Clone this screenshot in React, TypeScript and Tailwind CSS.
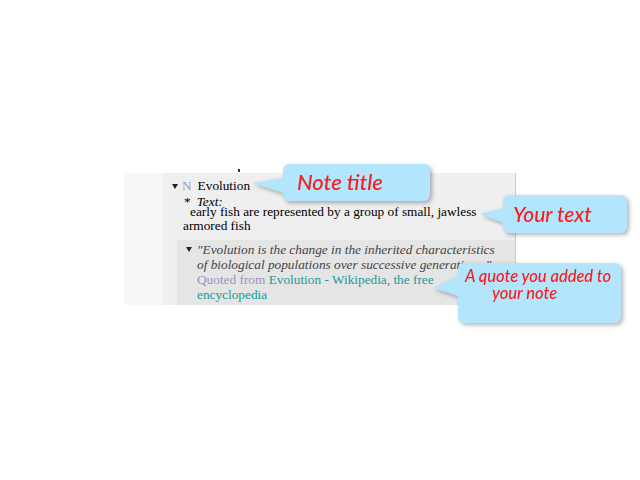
import React from 'react';

const Tri = ({ className }: { className: string }) => (
  <svg viewBox="0 0 6 5" className={className}>
    <polygon points="0,0 6,0 3,5" fill="currentColor" />
  </svg>
);

export default function App() {
  return (
    <div className="relative w-[640px] h-[480px] overflow-hidden bg-white pt-[173px] font-['Liberation_Serif',serif] text-[13.3px] text-black">
      {/* Outline panel */}
      <div className="ml-[124px] flex w-[392px] h-[132px]">
        <div className="w-[39px] bg-[#f7f7f7]" />
        <div className="flex-1 bg-[#efefef] border-r border-[#c8c8c8] pt-[5px]">
          {/* Note title row */}
          <div className="flex items-center h-[16px] leading-[16px] pl-[9px]">
            <Tri className="w-[6px] h-[5px] mr-[4px] text-[#222]" />
            <span className="text-[#9a9ac0]">N</span>
            <span className="ml-[6px]">Evolution</span>
          </div>

          {/* Text label */}
          <div className="flex h-[11px] leading-[16px] pl-[21px]">
            <span>*</span>
            <span className="ml-[6px] italic">Text:</span>
          </div>

          {/* Note text */}
          <div className="pl-[20px] leading-[14px]">
            <div className="pl-[7px]">early fish are represented by a group of small, jawless</div>
            <div>armored fish</div>
          </div>

          {/* Quote */}
          <div className="mt-[7px] ml-[14px] flex bg-[#e5e5e5] pt-[2px] pb-[3px] pl-[9px] leading-[15px]">
            <Tri className="mt-[5px] w-[6px] h-[5px] mr-[5px] shrink-0 text-[#222]" />
            <div>
              <div className="italic text-[#444]">"Evolution is the change in the inherited characteristics</div>
              <div className="italic text-[#444]">of biological populations over successive generations."</div>
              <div>
                <span className="text-[#9a92c4]">Quoted from </span>
                <span className="text-[#1a9a98]">Evolution - Wikipedia, the free</span>
              </div>
              <div className="text-[#1a9a98]">encyclopedia</div>
            </div>
          </div>
        </div>
      </div>

      {/* clipped descender from the row above */}
      <div className="absolute left-[238px] top-[169px] w-[2px] h-[3px] bg-[#333]" />

      {/* Callout: Note title */}
      <div className="absolute left-[250px] top-[164px] flex drop-shadow-[2px_2px_2px_rgba(0,0,0,0.3)]">
        <svg width="33" height="37" className="block shrink-0">
          <polygon points="2,19 33,14 33,29" fill="#b3e5fc" />
        </svg>
        <div className="w-[147px] h-[37px] rounded-[6px] bg-[#b3e5fc] pl-[14px] pt-[4px] font-['Lato',sans-serif] italic font-medium text-[22px] leading-[28px] text-[#ff1a1a]">
          Note title
        </div>
      </div>

      {/* Callout: Your text */}
      <div className="absolute left-[478px] top-[195px] flex drop-shadow-[2px_2px_2px_rgba(0,0,0,0.3)]">
        <svg width="25" height="38" className="block shrink-0">
          <polygon points="2,19 25,13 25,28" fill="#b3e5fc" />
        </svg>
        <div className="w-[124px] h-[38px] rounded-[6px] bg-[#b3e5fc] pl-[10px] pt-[5px] font-['Lato',sans-serif] italic font-medium text-[21px] leading-[28px] text-[#ff1a1a]">
          Your text
        </div>
      </div>

      {/* Callout: quote */}
      <div className="absolute left-[431px] top-[263px] flex drop-shadow-[2px_2px_2px_rgba(0,0,0,0.3)]">
        <svg width="27" height="60" className="block shrink-0">
          <polygon points="2,25 27,13 27,33" fill="#b3e5fc" />
        </svg>
        <div className="w-[163px] h-[60px] rounded-[6px] bg-[#b3e5fc] pt-[5px] font-['Lato',sans-serif] italic font-medium text-[16.5px] leading-[17px] text-[#ff1a1a]">
          <div className="pl-[7px]">A quote you added to</div>
          <div className="pl-[34px]">your note</div>
        </div>
      </div>
    </div>
  );
}
